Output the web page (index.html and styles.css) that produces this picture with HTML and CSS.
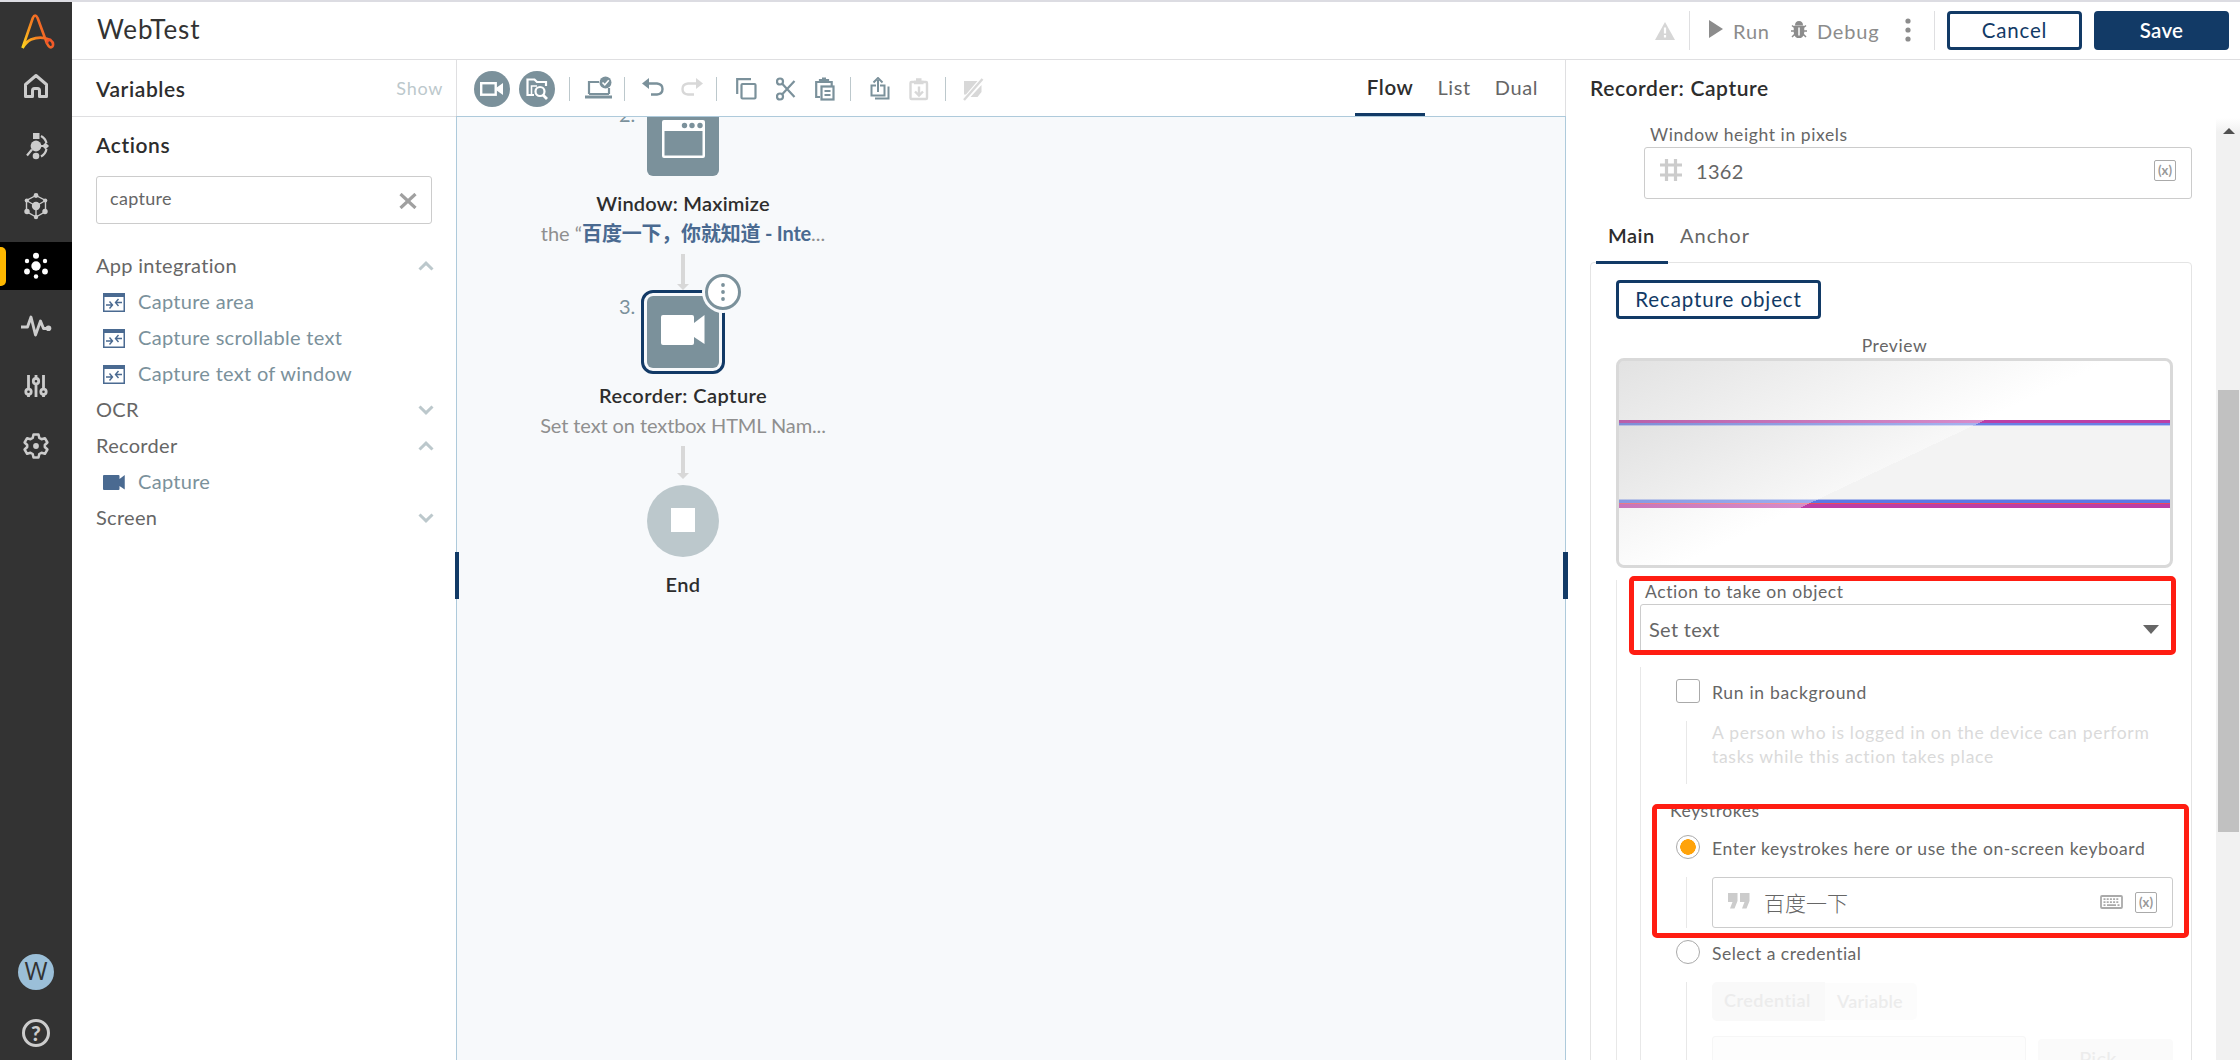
FILE: index.html
```html
<!DOCTYPE html>
<html lang="en">
<head>
  <meta charset="UTF-8">
  <title>WebTest</title>
  <link rel="stylesheet" href="styles.css">
</head>
<body>
  <!-- shared icons -->
  <svg class="defs" width="0" height="0">
    <symbol id="i-window" viewBox="0 0 22 19"><path d="M0 0h22v19H0z M1.5 4v13.500h19V4z" fill="#4a6a91" fill-rule="evenodd"/><path d="M3 12h6M6.500 8.500l3 3.500-3 3.500M19 9.500h-6M15.500 6l-3 3.500 3 3.500" fill="none" stroke="#4a6a91" stroke-width="1.400"/></symbol>
    <symbol id="i-chevron" viewBox="0 0 16 10"><path d="M1.500 8.500L8 2.200l6.500 6.300" fill="none" stroke="#bcc8cc" stroke-width="3"/></symbol>
    <symbol id="i-camera" viewBox="0 0 44 30"><path d="M2 0h29a2 2 0 0 1 2 2v6L43.500 0v29L33 22v6a2 2 0 0 1-2 2H2a2 2 0 0 1-2-2V2a2 2 0 0 1 2-2z" fill="currentColor"/></symbol>
  </svg>

  <div class="app">
    <nav class="sidebar">
      <div class="logo">
        <svg width="34" height="36" viewBox="0 0 34 36">
          <defs><linearGradient id="flame" x1="0" y1="1" x2="1" y2="0.600"><stop offset="0" stop-color="#ffd51e"/><stop offset="0.500" stop-color="#f58220"/><stop offset="1" stop-color="#f1502b"/></linearGradient></defs>
          <path d="M1.500 34L11.800 4q2.300-5 4.800 0L26 29.500q3 5.800 5.500 3 1.800-3.500-2-6.500Q20 21.500 10 25.500 5 28 1.500 34" fill="none" stroke="url(#flame)" stroke-width="2.600" stroke-linejoin="round"/>
          <path d="M26 29.500q.2-4 3.500-3.500" fill="none" stroke="#f1502b" stroke-width="2.400"/>
        </svg>
      </div>
      <a class="nav-item">
        <svg width="26" height="26" viewBox="0 0 26 26"><path d="M2.500 11.500L13 2.500l10.500 9V23.500h-7v-6q0-2-2-2h-3q-2 0-2 2v6h-7z" fill="none" stroke="#ccc" stroke-width="3" stroke-linejoin="round"/></svg>
      </a>
      <a class="nav-item">
        <svg width="26" height="28" viewBox="0 0 26 28" fill="#ccc"><rect x="10" y="1" width="6.500" height="6"/><circle cx="13" cy="14" r="5.400"/><circle cx="13" cy="24" r="3.300"/><path d="M22.500 10.500l3.500 3.500-3.500 3.500L19 14z"/><path d="M17 14h6M9 17.500l-5 6M18 4q4.500 2.500 5.500 7M18 24.500q4.500-2.500 5.500-7.500" fill="none" stroke="#ccc" stroke-width="2.200"/></svg>
      </a>
      <a class="nav-item">
        <svg width="26" height="28" viewBox="0 0 26 28" fill="#ccc"><path d="M13 3.500l9.500 5v11L13 25l-9.500-5.500v-11zM3.500 8.500L13 14l9.500-5.500M13 14v11" fill="none" stroke="#ccc" stroke-width="1.400"/><circle cx="13" cy="14" r="4.200"/><circle cx="13" cy="3.500" r="2.400"/><circle cx="13" cy="25" r="2.200"/><circle cx="3.800" cy="8.500" r="2.100"/><circle cx="22.200" cy="8.500" r="2.100"/><circle cx="4" cy="19.500" r="2.700"/><circle cx="22" cy="19.500" r="2.700"/></svg>
      </a>
      <a class="nav-item active">
        <svg width="26" height="28" viewBox="0 0 26 28" fill="#fff"><circle cx="13" cy="14" r="4.700"/><circle cx="13" cy="3.800" r="3"/><circle cx="13" cy="24.500" r="2.200"/><circle cx="4" cy="9" r="2.200"/><circle cx="22" cy="9" r="2.200"/><circle cx="4" cy="19.500" r="2.900"/><circle cx="22" cy="19.500" r="2.900"/></svg>
      </a>
      <a class="nav-item">
        <svg width="32" height="24" viewBox="0 0 32 24"><path d="M1 13h6.500L11 3l4.500 18 5-14 3 7.500h4" fill="none" stroke="#ccc" stroke-width="2.900" stroke-linejoin="round"/><circle cx="28.500" cy="14.300" r="2.800" fill="#ccc"/></svg>
      </a>
      <a class="nav-item">
        <svg width="24" height="24" viewBox="0 0 24 24" fill="none" stroke="#ccc" stroke-width="2.800"><path d="M4.500 1v14M4.500 21v2M12 1v3M12 10v13M19.500 1v14M19.500 21v2"/><circle cx="4.500" cy="17.800" r="2.700"/><circle cx="12" cy="7.200" r="2.700"/><circle cx="19.500" cy="17.800" r="2.700"/></svg>
      </a>
      <a class="nav-item">
        <svg width="26" height="26" viewBox="0 0 26 26"><path d="M10.500 1.500h5l.8 3.500 2.200 1.200 3.400-1 2.500 4.300-2.600 2.500v2l2.600 2.500-2.500 4.300-3.400-1-2.200 1.200-.8 3.500h-5L9.700 21l-2.200-1.200-3.400 1-2.500-4.300L4.200 14v-2L1.600 9.500l2.500-4.300 3.400 1L9.700 5z" fill="none" stroke="#ccc" stroke-width="2.500" stroke-linejoin="round"/><circle cx="13" cy="13" r="2.900" fill="#ccc"/></svg>
      </a>
      <div class="sidebar-bottom">
        <div class="avatar">W</div>
        <div class="help">?</div>
      </div>
    </nav>

    <div class="workspace">
      <header class="header">
        <h1>WebTest</h1>
        <div class="header-tools">
          <svg class="warn" width="20" height="18" viewBox="0 0 20 18"><path d="M10 0l10 18H0z" fill="#d6d6d6"/><path d="M10 5.500v6M10 13v2.500" stroke="#fff" stroke-width="2.200"/></svg>
          <div class="run-tools">
            <svg class="play" width="14" height="18" viewBox="0 0 14 18"><path d="M0 0l14 9-14 9z" fill="#8c8c8c"/></svg>
            <span class="run">Run</span>
            <svg class="bug" width="16" height="17" viewBox="0 0 16 17"><path d="M4 4.500q0-4.500 4-4.500t4 4.500z" fill="#8c8c8c"/><path d="M3.500 5.500h9v6q-.5 5-4.500 5t-4.500-5zM0 10h16M1 4.500l3 2.500M15 4.500L12 7M1 16l3-3M15 16l-3-3" fill="#8c8c8c" stroke="#8c8c8c" stroke-width="1.500"/><path d="M8 6.500v8" stroke="#fff" stroke-width="1.500"/></svg>
            <span class="debug">Debug</span>
            <svg class="dots" width="6" height="24" viewBox="0 0 6 24" fill="#8c8c8c"><circle cx="3" cy="3" r="2.600"/><circle cx="3" cy="12" r="2.600"/><circle cx="3" cy="21" r="2.600"/></svg>
          </div>
          <button class="btn">Cancel</button>
          <button class="btn btn-primary">Save</button>
        </div>
      </header>

      <div class="columns">
        <aside class="palette">
          <div class="variables"><h2>Variables</h2><span class="show">Show</span></div>
          <div class="actions">
            <h2>Actions</h2>
            <div class="search">
              <span>capture</span>
              <svg width="18" height="16" viewBox="0 0 18 16"><path d="M1.500 1l15 14M16.500 1l-15 14" stroke="#a0a0a0" stroke-width="3.200"/></svg>
            </div>
            <ul class="tree">
              <li class="group"><span>App integration</span><svg width="16" height="10"><use href="#i-chevron"/></svg></li>
              <li class="leaf"><svg width="22" height="19"><use href="#i-window"/></svg><span>Capture area</span></li>
              <li class="leaf"><svg width="22" height="19"><use href="#i-window"/></svg><span>Capture scrollable text</span></li>
              <li class="leaf"><svg width="22" height="19"><use href="#i-window"/></svg><span>Capture text of window</span></li>
              <li class="group closed"><span>OCR</span><svg width="16" height="10"><use href="#i-chevron"/></svg></li>
              <li class="group"><span>Recorder</span><svg width="16" height="10"><use href="#i-chevron"/></svg></li>
              <li class="leaf"><svg class="leaf-camera" width="22" height="15"><use href="#i-camera"/></svg><span>Capture</span></li>
              <li class="group closed"><span>Screen</span><svg width="16" height="10"><use href="#i-chevron"/></svg></li>
            </ul>
          </div>
        </aside>

        <main class="editor">
          <div class="toolbar">
            <div class="round">
              <svg width="24" height="16" viewBox="0 0 24 16"><rect x="1.200" y="2.200" width="14.500" height="11.500" fill="none" stroke="#fff" stroke-width="2.400"/><path d="M16 7l7-5v12l-7-5z" fill="#fff"/></svg>
            </div>
            <div class="round second">
              <svg width="24" height="24" viewBox="0 0 24 24" fill="none" stroke="#fff" stroke-width="2.200"><path d="M21 9V5h-9L9.500 2.500h-7V18H9"/><path d="M6.500 17V9H12" stroke-width="1.600"/><circle cx="15" cy="14.500" r="4.500"/><path d="M18 18l4 4" stroke-width="2.800"/></svg>
            </div>
            <i class="sep"></i>
            <svg class="t-laptop" width="28" height="24" viewBox="0 0 28 24"><path d="M4 18V6h10M24 12v6" fill="none" stroke="#7b919b" stroke-width="2.200"/><path d="M0 19.500h27v3H0z" fill="#7b919b"/><path d="M4 18h20" stroke="#7b919b" stroke-width="2"/><circle cx="20.500" cy="6.500" r="6" fill="#7b919b"/><path d="M17.500 6.500l2.300 2.300 4-4.500" fill="none" stroke="#fff" stroke-width="1.600"/></svg>
            <i class="sep"></i>
            <svg class="t-undo" width="22" height="18" viewBox="0 0 22 18"><path d="M5 5.500h10q5.500.5 5.500 5.500T15 16.500H9" fill="none" stroke="#7b919b" stroke-width="2.400"/><path d="M7 0v11L0 5.500z" fill="#7b919b"/></svg>
            <svg class="t-redo" width="22" height="18" viewBox="0 0 22 18"><path d="M17 5.500H7Q1.500 6 1.500 11T7 16.500h6" fill="none" stroke="#d8d8d8" stroke-width="2.400"/><path d="M15 0v11l7-5.500z" fill="#d8d8d8"/></svg>
            <i class="sep"></i>
            <svg class="t-copy" width="21" height="22" viewBox="0 0 21 22" fill="none" stroke="#7b919b" stroke-width="2.200"><path d="M1.200 16V1.200H15"/><rect x="5.500" y="6" width="14" height="14.500" rx="1"/></svg>
            <svg class="t-cut" width="20" height="24" viewBox="0 0 20 24" fill="none" stroke="#7b919b" stroke-width="2.200"><circle cx="4" cy="4.500" r="3"/><circle cx="4" cy="19.500" r="3"/><path d="M6 6.500L18.500 20M6 17.500L18.500 4"/></svg>
            <svg class="t-paste" width="20" height="24" viewBox="0 0 20 24" fill="none" stroke="#7b919b" stroke-width="2.200"><path d="M5 20H1.200V5h15.500v4M5 5V3h8v2"/><path d="M7 2h4" stroke-width="3"/><rect x="6.500" y="9.500" width="12" height="13"/><path d="M9.500 14h6M9.500 18h6"/></svg>
            <i class="sep"></i>
            <svg class="t-share" width="20" height="24" viewBox="0 0 20 24" fill="none" stroke="#7b919b" stroke-width="2"><path d="M6 8.500H1.500v10h13v-10H10M18.500 9.500v12H5M8 15V3"/><path d="M3.500 5.500L8 1l4.500 4.500"/></svg>
            <svg class="t-load" width="20" height="24" viewBox="0 0 20 24" fill="none" stroke="#d8d8d8" stroke-width="2.400"><rect x="1.500" y="5" width="16.500" height="17" rx="1"/><path d="M5 5.500h9.500M7 3h5.500" stroke-width="3.500"/><path d="M10 9.500v9M6 14.500l4 4 4-4"/></svg>
            <i class="sep"></i>
            <svg class="t-note" width="21" height="23" viewBox="0 0 21 23"><path d="M1 3h13.500L3 16.500H1zM18.500 7v7l-4 5H7.500z" fill="#d8d8d8"/><path d="M1 22L19.500 1" stroke="#d8d8d8" stroke-width="2.400"/></svg>
            <div class="views">
              <span class="view view-flow">Flow</span>
              <span class="view">List</span>
              <span class="view">Dual</span>
            </div>
          </div>

          <div class="canvas">
            <div class="flow">
              <div class="tile">
                <span class="num">2.</span>
                <svg width="43" height="38" viewBox="0 0 43 38"><path d="M2 0h39q2 0 2 2v34q0 2-2 2H2q-2 0-2-2V2q0-2 2-2zM2.500 11v24.500h38V11z" fill="#fff" fill-rule="evenodd"/><g fill="#7b919b"><circle cx="22.500" cy="5.500" r="2.700"/><circle cx="30" cy="5.500" r="2.700"/><circle cx="38" cy="5.500" r="2.700"/></g></svg>
              </div>
              <div class="title">Window: Maximize</div>
              <div class="sub"><span>the “</span><b>百度一下，你就知道 - Inte</b><span>...</span></div>
              <svg class="arrow" width="12" height="36" viewBox="0 0 12 36"><path d="M4 0h4v30h4l-6 6-6-6h4z" fill="#d8d8d8"/></svg>
              <div class="selected">
                <div class="tile">
                  <span class="num">3.</span>
                  <svg class="tile-camera" width="44" height="30"><use href="#i-camera"/></svg>
                </div>
                <div class="more">
                  <svg width="4" height="18" viewBox="0 0 4 18" fill="#7b919b"><circle cx="2" cy="2" r="1.900"/><circle cx="2" cy="9" r="1.900"/><circle cx="2" cy="16" r="1.900"/></svg>
                </div>
              </div>
              <div class="title t-rec">Recorder: Capture</div>
              <div class="sub s-rec">Set text on textbox HTML Nam...</div>
              <svg class="arrow" width="12" height="33" viewBox="0 0 12 33"><path d="M4 0h4v27h4l-6 6-6-6h4z" fill="#d8d8d8"/></svg>
              <div class="stop"><i></i></div>
              <div class="title t-rec t-end">End</div>
            </div>
          </div>
          <i class="grip grip-left"></i>
          <i class="grip grip-right"></i>
        </main>

        <section class="details">
          <h2>Recorder: Capture</h2>
          <div class="scroll">
            <div class="form">
              <div class="field">
                <label class="label l-height">Window height in pixels</label>
                <div class="input">
                  <svg width="22" height="22" viewBox="0 0 22 22"><path d="M6.500 0v22M15.500 0v22M0 6h22M0 16h22" stroke="#ccc" stroke-width="3.200"/></svg>
                  <span class="value">1362</span>
                  <span class="var">(x)</span>
                </div>
              </div>

              <div class="tabs">
                <span class="tab tab-main">Main</span>
                <span class="tab tab-anchor">Anchor</span>
              </div>

              <div class="panel">
                <button class="btn recapture">Recapture object</button>
                <div class="label preview-label">Preview</div>
                <div class="preview"><div class="gloss"></div></div>

                <div class="branch">
                  <div class="action">
                    <label class="label l-action">Action to take on object</label>
                    <div class="select"><span>Set text</span><i></i></div>
                    <div class="mark mark-action"></div>
                  </div>

                  <div class="branch inner">
                    <div class="option"><i class="check"></i><span>Run in background</span></div>
                    <div class="nested hint">A person who is logged in on the device can perform<br>tasks while this action takes place</div>
                    <div class="keys">
                      <div class="label l-keys">Keystrokes</div>
                      <div class="option"><i class="radio on"></i><span class="o-enter">Enter keystrokes here or use the on-screen keyboard</span></div>
                      <div class="nested">
                        <div class="input">
                          <svg width="22" height="16" viewBox="0 0 22 16" fill="#ccc"><path d="M0 0h9.500v8L6.500 15.500H2L4.500 9H0zM12 0h9.500v8l-3 7.500H14L16.500 9H12z"/></svg>
                          <span class="value cjk">百度一下</span>
                          <svg class="keyboard" width="23" height="14" viewBox="0 0 23 14"><rect x="1" y="1" width="21" height="12" rx="1" fill="none" stroke="#aaa" stroke-width="1.800"/><path d="M3.500 4.200h16M3.500 7.200h16" stroke="#aaa" stroke-width="1.700" stroke-dasharray="2 1.200"/><path d="M3.500 10.200h2M7 10.200h9M17.500 10.200h2" stroke="#aaa" stroke-width="1.700"/></svg>
                          <span class="var">(x)</span>
                        </div>
                      </div>
                      <div class="mark mark-keys"></div>
                    </div>
                    <div class="option second-option"><i class="radio"></i><span class="o-cred">Select a credential</span></div>
                    <div class="nested credential">
                      <div class="segments"><span class="seg seg-on">Credential</span><span class="seg">Variable</span></div>
                      <div class="pick-row"><div class="pick-input"></div><div class="pick">Pick...</div></div>
                    </div>
                  </div>
                </div>
              </div>
            </div>
            <div class="scrollbar"><i class="up"></i><i class="thumb"></i></div>
          </div>
        </section>
      </div>
    </div>
  </div>
</body>
</html>
```

FILE: styles.css
```css
* {
  box-sizing: border-box;
}
body {
  margin: 0;
  font-family: Lato, "Noto Sans CJK SC", sans-serif;
  font-size: 20px;
  letter-spacing: 0.3px;
  color: #666;
  background: #fff;
}
h1, h2, ul {
  margin: 0;
  padding: 0;
}
h1 {
  font-size: 26px;
  font-weight: 400;
  letter-spacing: 0.9px;
  color: #333;
}
h2 {
  font-size: 21px;
  font-weight: 600;
  letter-spacing: 0.6px;
  color: #2d2d2d;
}
svg {
  display: block;
  flex: none;
}
.defs {
  position: absolute;
}
.app {
  display: flex;
  height: 1060px;
  border-top: 2px solid #dcdce2;
  overflow: hidden;
}

/* sidebar */
.sidebar {
  width: 72px;
  flex: none;
  display: flex;
  flex-direction: column;
  background: #333;
}
.logo {
  height: 60px;
  padding: 12px 0 0 21px;
}
.nav-item {
  height: 48px;
  margin-bottom: 12px;
  display: flex;
  align-items: center;
  justify-content: center;
}
.nav-item.active {
  background: #000;
  position: relative;
}
.nav-item.active::before {
  content: "";
  position: absolute;
  left: 0;
  top: 5px;
  width: 6px;
  height: 39px;
  border-radius: 0 5px 5px 0;
  background: #ffb800;
}
.sidebar-bottom {
  margin-top: auto;
  display: flex;
  flex-direction: column;
  align-items: center;
  gap: 29px;
  padding-bottom: 13px;
}
.avatar {
  width: 36px;
  height: 36px;
  border-radius: 50%;
  background: #9bbfd8;
  color: #333;
  font: 25px/33px "Open Sans", sans-serif;
  text-align: center;
  letter-spacing: 0;
}
.help {
  width: 28px;
  height: 28px;
  border: 3px solid #ccc;
  border-radius: 50%;
  color: #ccc;
  font-size: 21px;
  font-weight: 900;
  line-height: 22px;
  text-align: center;
  letter-spacing: 0;
}

/* header */
.workspace {
  flex: 1;
  display: flex;
  flex-direction: column;
  min-width: 0;
}
.header {
  height: 58px;
  flex: none;
  display: flex;
  align-items: center;
  justify-content: space-between;
  padding: 0 11px 0 25px;
  border-bottom: 1px solid #dfdfe1;
}
.header h1 {
  line-height: 54px;
  height: 57px;
}
.header-tools {
  display: flex;
  align-items: center;
  gap: 12px;
  color: #8c8c8c;
}
.warn {
  margin-right: 2px;
}
.run-tools {
  width: 246px;
  height: 39px;
  display: flex;
  align-items: center;
  padding: 2px 0 0 19px;
  border-left: 1px solid #dfdfe1;
  border-right: 1px solid #dfdfe1;
  letter-spacing: 0.8px;
}
.run-tools span {
  margin-top: -2px;
}
.play {
  margin: -5px 10px 0 0;
}
.run {
  width: 58px;
}
.bug {
  margin: -4px 10px 0 0;
}
.debug {
  width: 88px;
}
.dots {
  margin-top: -4px;
}
.btn {
  width: 135px;
  height: 39px;
  padding: 0 0 2px;
  border: 3px solid #123a66;
  border-radius: 4px;
  background: #fff;
  color: #123a66;
  font: 20.5px Lato, sans-serif;
  letter-spacing: 0.8px;
}
.btn-primary {
  background: #123a66;
  color: #fff;
  font-weight: 600;
  letter-spacing: 0.3px;
}
.columns {
  flex: 1;
  display: flex;
  min-height: 0;
}

/* left column */
.palette {
  width: 384px;
  flex: none;
}
.variables {
  height: 57px;
  display: flex;
  align-items: center;
  justify-content: space-between;
  padding: 1px 13px 0 24px;
  border-bottom: 1px solid #dfdfe1;
}
.show {
  color: #bcc8cc;
  font-size: 18px;
  margin-top: -2px;
  letter-spacing: 0.7px;
}
.actions {
  padding: 15px 24px 0;
}
.actions h2 {
  line-height: 26px;
}
.search {
  height: 48px;
  margin-top: 18px;
  display: flex;
  align-items: center;
  justify-content: space-between;
  padding: 0 14px 4px 13px;
  border: 1px solid #ccc;
  border-radius: 3px;
  font-size: 18px;
}
.search svg {
  margin-top: 5px;
}
.tree {
  list-style: none;
  margin-top: 24px;
}
.group, .leaf {
  height: 36px;
  display: flex;
  align-items: center;
}
.group span, .leaf span {
  margin-top: -3px;
}
.group {
  justify-content: space-between;
}
.group svg {
  margin-right: -2px;
}
.group.closed svg {
  transform: scaleY(-1);
}
.leaf {
  color: #7b919b;
  padding-left: 7px;
}
.leaf svg {
  margin-right: 13px;
}
.leaf-camera {
  color: #4a6a91;
}

/* middle column */
.editor {
  width: 1110px;
  flex: none;
  display: flex;
  flex-direction: column;
  position: relative;
}
.toolbar {
  height: 56px;
  flex: none;
  display: flex;
  align-items: center;
  padding: 2px 0 0 17px;
  border-left: 1px solid #dfdfe1;
  border-right: 1px solid #dfdfe1;
}
.round {
  width: 36px;
  height: 36px;
  border-radius: 50%;
  background: #7b919b;
  display: flex;
  align-items: center;
  justify-content: center;
}
.second {
  margin: 0 14px 0 9px;
}
.sep {
  width: 1px;
  height: 24px;
  background: #bcc8cc;
}
.t-laptop {
  margin: -2px 11px 0 15px;
}
.t-undo {
  margin: -4px 17px 0 17px;
}
.t-redo {
  margin: -4px 13px 0 0;
}
.t-copy {
  margin: 0 19px;
}
.t-paste {
  margin: 0 15px 0 19px;
}
.t-share {
  margin: 0 19px;
}
.t-load {
  margin-right: 16px;
}
.t-note {
  margin-left: 17px;
}
.views {
  margin-left: auto;
  padding-right: 15px;
  height: 54px;
  display: flex;
}
.view {
  padding: 0 12px;
  line-height: 51px;
  letter-spacing: 0.6px;
}
.view-flow {
  border-bottom: 3px solid #123a66;
  font-size: 20.5px;
  font-weight: 600;
  color: #2d2d2d;
}
.canvas {
  flex: 1;
  min-height: 0;
  background: #f7f9fb;
  border: 1px solid #aecadb;
  border-bottom: 0;
  overflow: hidden;
}
.flow {
  width: 452px;
  margin-top: -13px;
  display: flex;
  flex-direction: column;
  align-items: center;
}
.tile {
  width: 72px;
  height: 72px;
  border-radius: 6px;
  background: #7b919b;
  color: #fff;
  display: flex;
  align-items: center;
  justify-content: center;
  position: relative;
}
.tile svg {
  margin-top: -2px;
}
.tile .tile-camera {
  margin: -4px 0 0;
}
.num {
  position: absolute;
  left: -28px;
  top: -2px;
  line-height: 24px;
  color: #7b919b;
  letter-spacing: 0;
}
.title {
  margin-top: 15px;
  line-height: 24px;
  font-weight: 600;
  color: #2d2d2d;
  letter-spacing: 0.2px;
}
.sub {
  margin-top: 6px;
  height: 24px;
  line-height: 24px;
  white-space: nowrap;
  color: #8f8f8f;
  letter-spacing: 0;
}
.s-rec {
  letter-spacing: -0.1px;
}
.sub b {
  color: #4a6a91;
  letter-spacing: -0.2px;
}
.arrow {
  margin-top: 9px;
}
.selected {
  width: 84px;
  height: 84px;
  padding: 3px;
  border: 3px solid #123a66;
  border-radius: 12px;
  position: relative;
}
.more {
  position: absolute;
  top: -19px;
  right: -19px;
  width: 36px;
  height: 36px;
  border: 3px solid #7b919b;
  border-radius: 50%;
  background: #fff;
  box-shadow: 0 0 0 3px #f7f9fb;
  display: flex;
  align-items: center;
  justify-content: center;
}
.t-rec {
  margin-top: 9px;
  letter-spacing: 0.45px;
}
.t-end {
  margin-top: 15px;
}
.stop {
  width: 72px;
  height: 72px;
  margin-top: 6px;
  border-radius: 50%;
  background: #bcc8cc;
  display: flex;
  align-items: center;
  justify-content: center;
}
.stop i {
  width: 24px;
  height: 24px;
  margin-top: -2px;
  background: #fff;
}
.grip {
  position: absolute;
  top: 492px;
  width: 4px;
  height: 47px;
  background: #123a66;
}
.grip-left {
  left: -1px;
}
.grip-right {
  right: -2px;
  width: 5px;
}

/* right column */
.details {
  flex: 1;
  display: flex;
  flex-direction: column;
  min-width: 0;
}
.details h2 {
  height: 58px;
  line-height: 56px;
  padding-left: 24px;
}
.scroll {
  flex: 1;
  min-height: 0;
  display: flex;
  overflow: hidden;
}
.form {
  flex: 1;
  padding: 4px 24px 0;
}
.scrollbar {
  width: 24px;
  padding: 10px 1px 0 2px;
  background: linear-gradient(#fff, #f1f1f1 14px);
}
.up {
  display: block;
  width: 12px;
  margin: 0 auto 256px;
  border: 6px solid transparent;
  border-top: 0;
  border-bottom-color: #505050;
}
.thumb {
  display: block;
  height: 442px;
  background: #c1c1c1;
}
.field {
  margin-left: 54px;
}
.label {
  display: block;
  font-size: 17.5px;
  line-height: 25px;
  letter-spacing: 0.6px;
}
.l-height {
  padding-left: 6px;
}
.input {
  height: 52px;
  display: flex;
  align-items: center;
  padding: 0 15px 6px;
  border: 1px solid #ccc;
  border-radius: 3px;
}
.value {
  margin-left: 14px;
  margin-right: auto;
  padding-top: 1px;
}
.cjk {
  font-family: "Noto Sans CJK SC", sans-serif;
  font-weight: 300;
  font-size: 21px;
  line-height: 24px;
  letter-spacing: 0;
}
.var {
  width: 22px;
  height: 21px;
  border: 1px solid #aaa;
  border-radius: 2px;
  color: #999;
  font-size: 13px;
  font-weight: 700;
  line-height: 18px;
  text-align: center;
  letter-spacing: 0;
}
.tabs {
  margin: 12px 0 -2px 6px;
  height: 53px;
  display: flex;
  position: relative;
}
.tab {
  padding: 0 12px;
  line-height: 48px;
}
.tab-anchor {
  letter-spacing: 1px;
}
.tab-main {
  width: 72px;
  border-bottom: 3px solid #123a66;
  font-weight: 600;
  color: #2d2d2d;
  letter-spacing: 0.5px;
}
.panel {
  height: 900px;
  padding: 17px 18px 0 25px;
  border: 1px solid #e4e4e4;
  border-radius: 4px;
}
.recapture {
  display: block;
  width: 205px;
  letter-spacing: 0.9px;
}
.preview-label {
  margin-top: 14px;
  text-align: center;
}
.preview {
  height: 210px;
  border: 3px solid #d9d9d9;
  border-radius: 8px;
  overflow: hidden;
  background: linear-gradient(#fff 59px, #bc3fa6 59px, #bc3fa6 62px, #6a7fe4 62px, #6a7fe4 64px, #b9c3f2 64px, #b9c3f2 65px, #f3f3f3 65px, #f3f3f3 138px, #a9b8ea 138px, #a9b8ea 139px, #5b78e4 139px, #5b78e4 142px, #ec4a5c 142px, #ec4a5c 143px, #bc3fa6 143px, #bc3fa6 147px, #fff 147px);
}
.gloss {
  height: 100%;
  background: linear-gradient(154.6deg, rgba(130, 130, 130, 0.23), rgba(255, 255, 255, 0.4) 50%, transparent 50%);
}
.branch {
  margin-top: 12px;
  border-left: 1px solid #e8e8e8;
}
.action {
  position: relative;
}
.l-action {
  height: 24px;
  line-height: 23px;
  padding-left: 28px;
}
.select {
  height: 50px;
  margin-left: 23px;
  padding: 0 13px 0 8px;
  border: 1px solid #ccc;
  border-radius: 3px;
  display: flex;
  align-items: center;
  justify-content: space-between;
}
.select i {
  border: 8px solid transparent;
  border-top: 9px solid #666;
  border-bottom: 0;
}
.mark {
  position: absolute;
  border: 5px solid #ff1d12;
  border-radius: 5px;
}
.mark-action {
  left: 12px;
  top: -4px;
  width: 547px;
  height: 79px;
}
.inner {
  height: 500px;
  margin: 13px 0 0 23px;
  padding-top: 12px;
}
.option {
  height: 24px;
  margin-left: 35px;
  display: flex;
  align-items: center;
  gap: 12px;
  font-size: 17.5px;
  letter-spacing: 0.7px;
  white-space: nowrap;
}
.option span {
  padding-top: 3px;
}
.option .o-enter {
  letter-spacing: 0.6px;
}
.option .o-cred {
  letter-spacing: 0.5px;
}
.check, .radio {
  width: 24px;
  height: 24px;
  border: 1px solid #aaa;
  border-radius: 3px;
}
.radio {
  border-radius: 50%;
}
.radio.on {
  background: radial-gradient(circle, #ffa30a 7.5px, transparent 8px);
}
.nested {
  margin: 18px 0 0 45px;
  padding-left: 25px;
  border-left: 1px solid #e8e8e8;
}
.nested .input {
  height: 51px;
  padding-bottom: 1px;
}
.nested .input > svg {
  margin-top: -2px;
}
.nested .cjk {
  padding-top: 0;
}
.nested .input > .keyboard {
  margin: 0 12px 0 0;
}
.hint {
  height: 63px;
  font-size: 17.5px;
  line-height: 24px;
  color: #dadada;
  white-space: nowrap;
  letter-spacing: 0.7px;
}
.keys {
  position: relative;
  margin-top: 14px;
}
.l-keys {
  height: 37px;
  padding-left: 29px;
}
.mark-keys {
  left: 11px;
  top: 6px;
  width: 537px;
  height: 134px;
}
.second-option {
  margin-top: 12px;
}
.credential {
  height: 200px;
  color: #ececec;
  font-size: 18px;
}
.segments {
  display: flex;
  align-items: center;
}
.seg {
  width: 92px;
  height: 37px;
  line-height: 37px;
  padding-left: 12px;
  background: #fcfcfc;
  border-radius: 0 5px 5px 0;
  font-weight: 600;
  letter-spacing: 0.2px;
}
.seg-on {
  width: 113px;
  height: 39px;
  background: #f9f9f9;
  border-radius: 5px 0 0 5px;
  letter-spacing: 0.5px;
}
.pick-row {
  display: flex;
  gap: 12px;
  margin-top: 15px;
}
.pick-input {
  width: 314px;
  height: 51px;
  border: 1px solid #f6f6f6;
  border-radius: 3px;
  background: #fdfdfd;
}
.pick {
  width: 135px;
  height: 40px;
  margin-top: 3px;
  border-radius: 4px;
  background: #fafafa;
  text-align: center;
  font-size: 20px;
  line-height: 38px;
}
```
